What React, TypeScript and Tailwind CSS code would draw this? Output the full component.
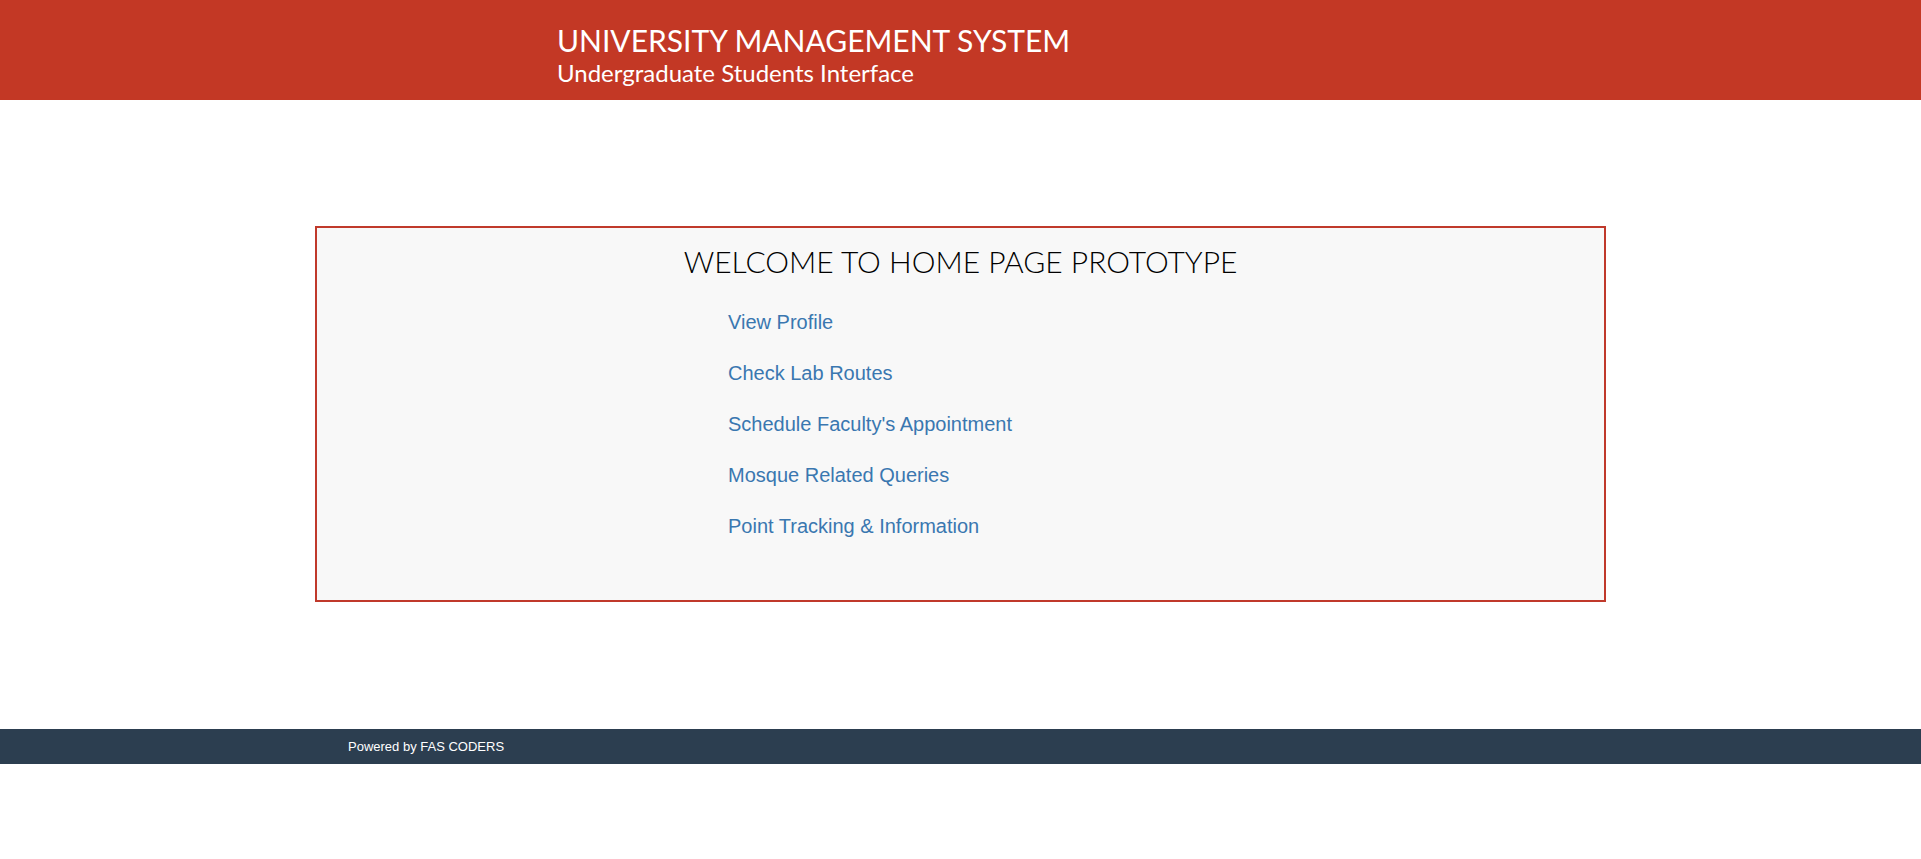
const links = [
  "View Profile",
  "Check Lab Routes",
  "Schedule Faculty's Appointment",
  "Mosque Related Queries",
  "Point Tracking & Information",
];

export default function App() {
  return (
    <div className="min-h-screen bg-white">
      <header className="h-[100px] bg-[#c33825] pl-[557px] pt-[23px] font-['Lato',sans-serif] text-white">
        <h1 className="text-[30px] leading-[35px]">UNIVERSITY MANAGEMENT SYSTEM</h1>
        <h2 className="text-[24px] leading-[30px]">Undergraduate Students Interface</h2>
      </header>

      <main className="pt-[126px] pb-[127px] px-[315px]">
        <div className="h-[376px] border-2 border-[#c0392b] bg-[#f8f8f8] pt-[13px]">
          <h3 className="text-center font-['Lato',sans-serif] text-[30px] font-light leading-[40px] text-black">
            WELCOME TO HOME PAGE PROTOTYPE
          </h3>
          <ul className="mt-[29px] flex flex-col gap-[27px] pl-[411px] font-['Liberation_Sans',Arial,sans-serif] text-[20px] leading-[24px] text-[#3a77b0]">
            {links.map((l) => (
              <li key={l}>
                <a href="#" className="hover:underline">
                  {l}
                </a>
              </li>
            ))}
          </ul>
        </div>
      </main>

      <footer className="flex h-[35px] items-center bg-[#2c3e50] pl-[348px] font-['Liberation_Sans',Arial,sans-serif] text-[13px] text-white">
        Powered by FAS CODERS
      </footer>
    </div>
  );
}
